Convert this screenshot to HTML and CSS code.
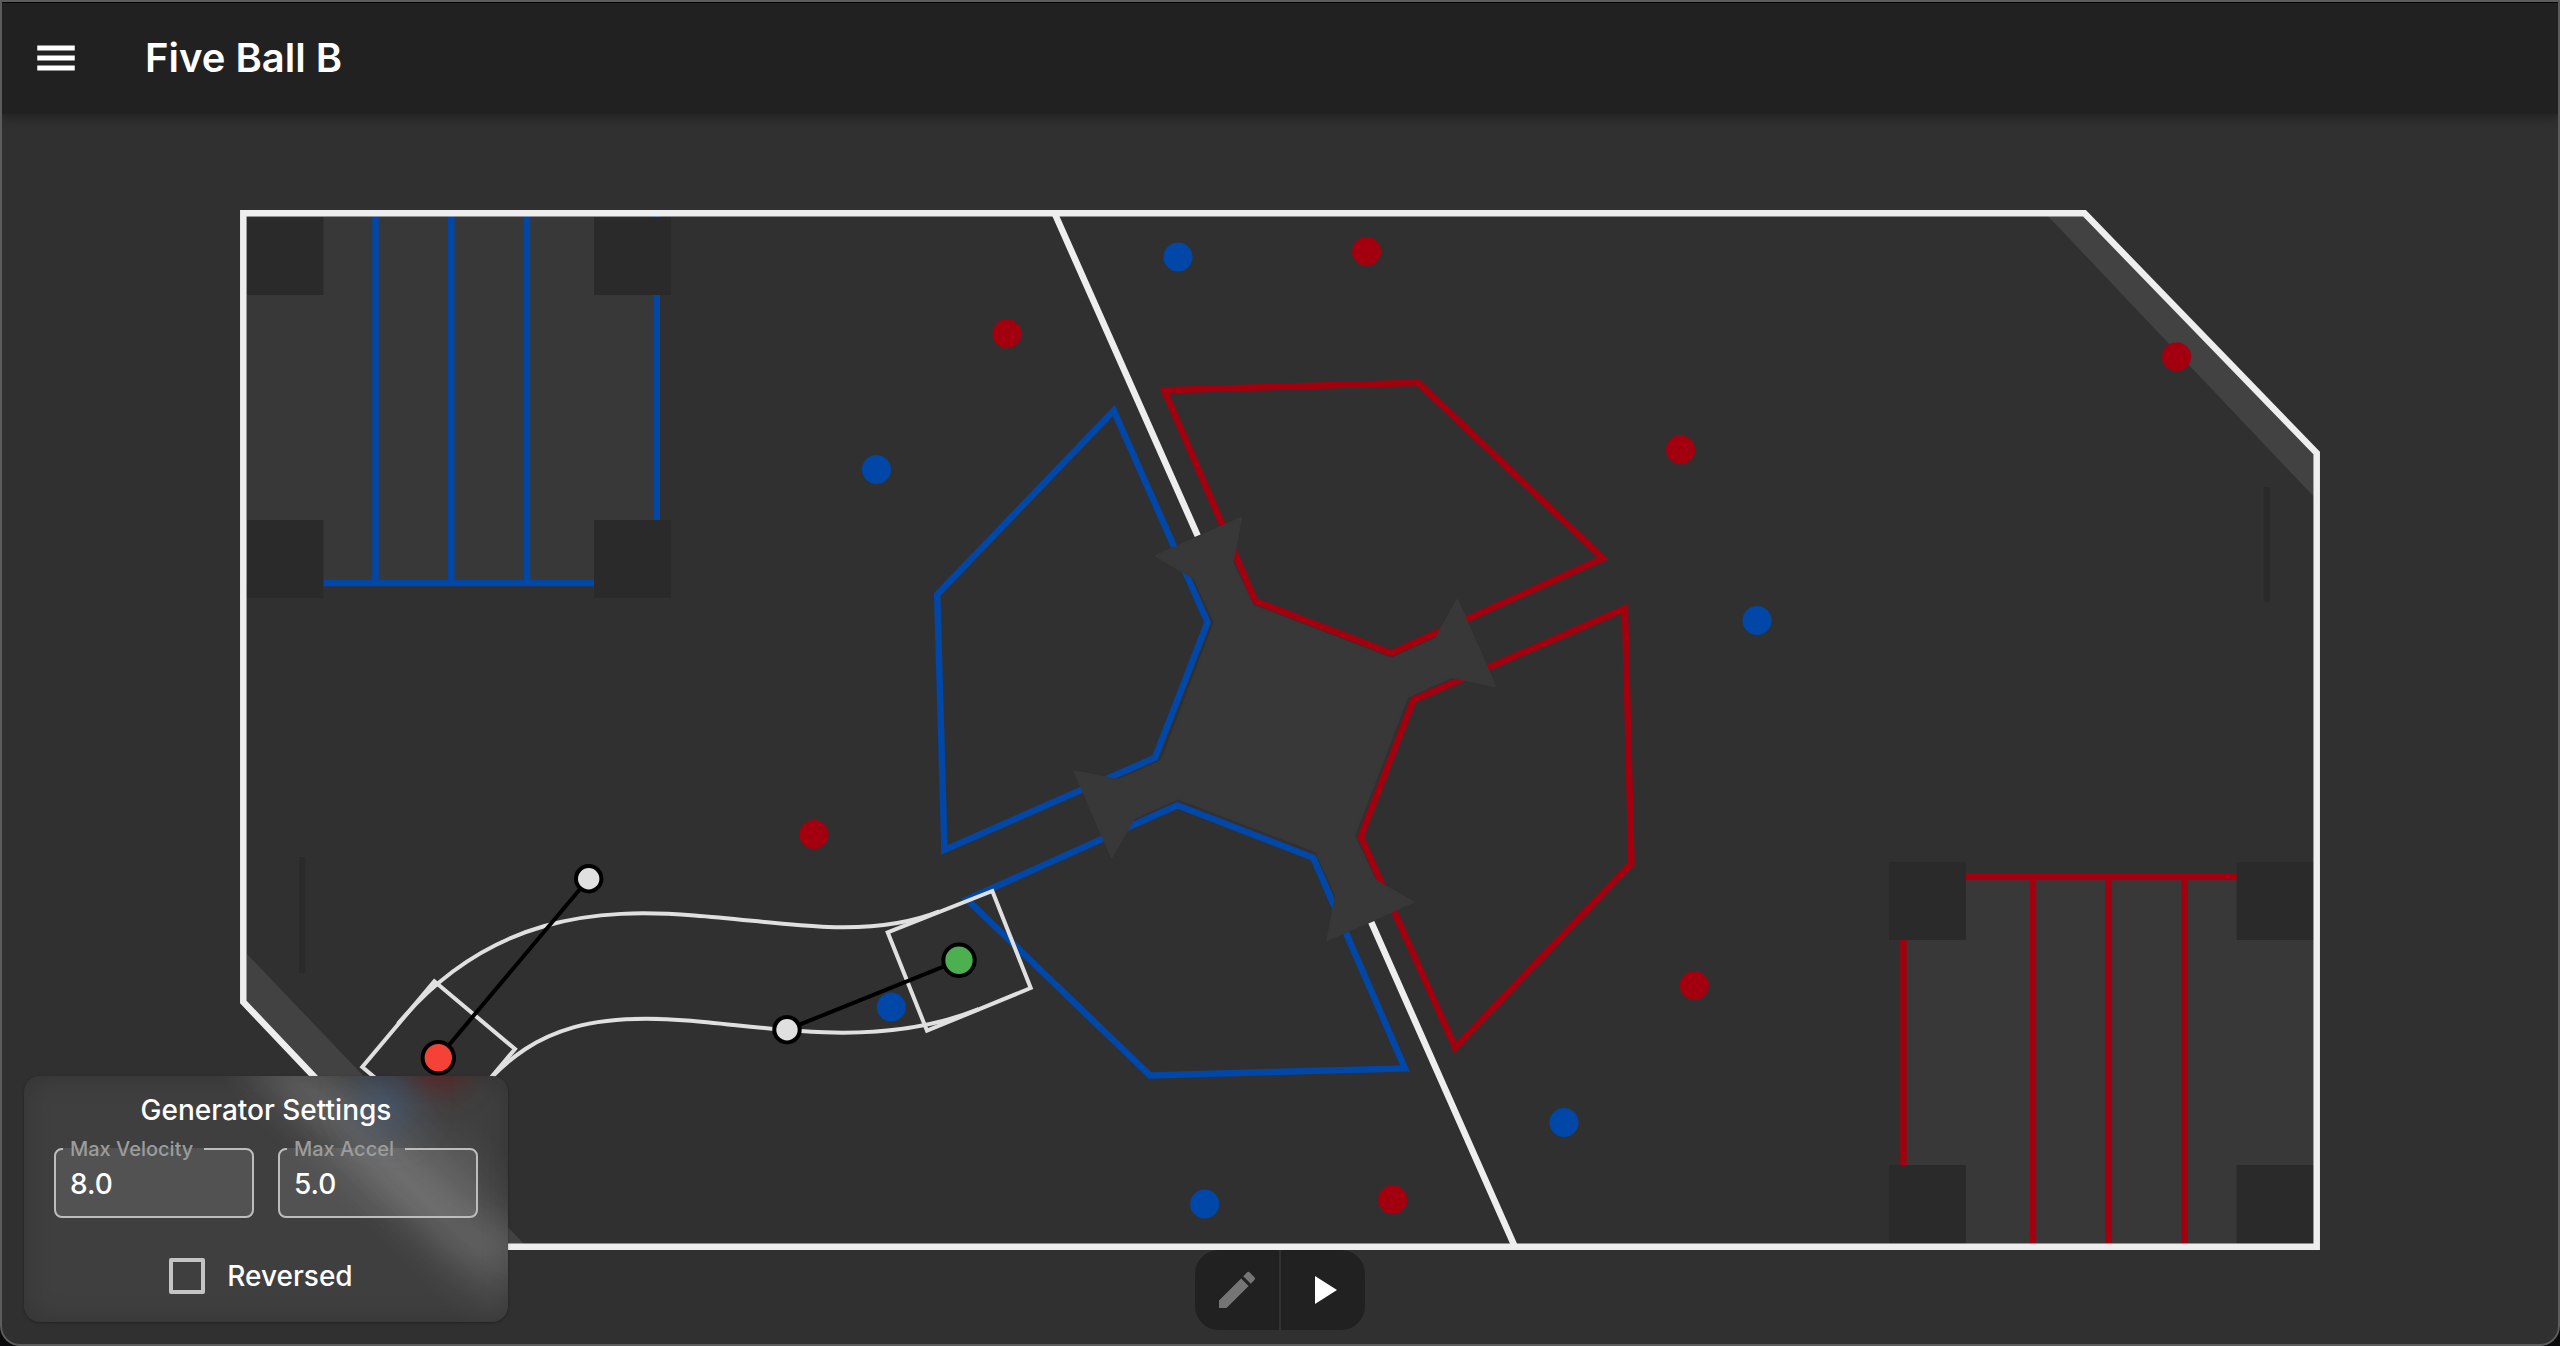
FILE: index.html
```html
<!DOCTYPE html>
<html lang="en">
<head>
<meta charset="utf-8">
<title>Five Ball B</title>
<meta name="viewport" content="width=device-width, initial-scale=1">
<link rel="stylesheet" href="styles.css">
</head>
<body>
<div class="window">
  <header class="app-bar">
    <button class="menu-button" type="button" aria-label="Open menu">
      <svg viewBox="0 0 24 24" aria-hidden="true"><path d="M3 18h18v-2.4H3zM3 13.2h18v-2.4H3zM3 6v2.4h18V6z"/></svg>
    </button>
    <h1 class="title">Five Ball B</h1>
  </header>

  <main class="stage">
    <svg class="field" viewBox="0 114 2560 1232" role="img" aria-label="Field with robot path">
      <!-- terminals -->
      <path class="terminal" d="M2046 214H2084L2316 453V499zM247 954V1008L476 1246H526z"/>
      <path class="block" d="M2263.5 487h6.5v115h-6.5zM299 857h6.5v116H299z"/>

      <!-- blue hangar -->
      <path class="floor" d="M246 216H657V583H246z"/>
      <path class="tape blue" d="M375.500 215V583M451.300 215V583M527 215V583M656.800 215V583M247 583H657"/>
      <path class="block" d="M247 217h76.500v78H247zM594 217h77v78h-77zM247 520h76.500v78H247zM594 520h77v78h-77z"/>

      <!-- red hangar -->
      <path class="floor" d="M1903 877H2314V1244H1903z"/>
      <path class="tape red" d="M2033 877V1245M2108.800 877V1245M2184.700 877V1245M1903.500 877V1245M1903 877H2313"/>
      <path class="block" d="M1889 862h77v78h-77zM2236.500 862H2314v78h-77.500zM1889 1165h77v79h-77zM2236.500 1165H2314v79h-77.500z"/>

      <!-- tarmacs -->
      <path class="tape blue" d="M1113.800 410.500L1207.600 622.300L1155 757.700L944.400 849.900L937.200 594.500z"/>
      <path class="tape blue" d="M1177.300 805.300L1313.300 857.700L1405 1068.400L1150 1075.400L967 899.400z"/>
      <path class="tape red" d="M1164.300 390.200L1418.400 382.800L1603 558.200L1391.300 653.300L1255.300 601z"/>
      <path class="tape red" d="M1455.300 1047.600L1360.800 836.700L1413.500 700L1625 608.500L1631.500 863.500z"/>
      <path class="tape white" d="M1054.500 213L1197.700 535.700M1371.300 922.300L1515 1247"/>

      <!-- hub -->
      <path class="hub" d="M1156 556L1241 518L1232.300 562.700L1252.700 605.700L1391.700 659L1435.700 638.700L1457.300 600L1495 686L1450.700 677L1407.300 697L1354 836L1375 880L1413 902L1327.500 940L1336 895L1316 851.300L1177.700 798.300L1134 818.300L1111.700 857L1074.500 771.500L1119.400 780L1161.700 761L1214.700 622L1194 578.300z"/>

      <!-- perimeter -->
      <path class="tape white" d="M243.300 213.300H2084.500L2316.700 453V1246.700H475.500L243.300 1002z"/>

      <!-- cargo -->
      <g class="cargo-blue">
        <circle cx="1178" cy="257" r="14.500"/><circle cx="876.500" cy="469.500" r="14.500"/>
        <circle cx="1757" cy="620.500" r="14.500"/><circle cx="1564" cy="1122.500" r="14.500"/>
        <circle cx="1204.700" cy="1204" r="14.500"/><circle cx="891.300" cy="1007" r="14.500"/>
        <circle cx="383.400" cy="1103" r="14.500"/>
      </g>
      <g class="cargo-red">
        <circle cx="1366.600" cy="251.600" r="14.500"/><circle cx="1007" cy="333.700" r="14.500"/>
        <circle cx="1680.600" cy="449.700" r="14.500"/><circle cx="814" cy="834.500" r="14.500"/>
        <circle cx="1694.400" cy="985.600" r="14.500"/><circle cx="1392.700" cy="1199.700" r="14.500"/>
        <circle cx="2176.600" cy="356.700" r="14.500"/>
      </g>

      <!-- robot path -->
      <g class="track">
        <path d="M397.900 1023.800C441.500 971.900 492.900 940.700 544.600 926C596.300 911.300 647 911.900 694.500 915.400C742 918.900 787 925.400 828.100 926.900C869.200 928.400 905.700 925 939.300 911.400"/>
        <path d="M478.700 1091.600C510.300 1054 540.200 1036.900 573.400 1027.400C606.600 1017.900 644.400 1017.200 686.700 1020.400C729 1023.600 775.200 1030.600 824.300 1032.300C873.400 1034 926.300 1030.300 978.700 1009.200"/>
        <path d="M434.300 981.300L515 1049L443 1134.700L362.300 1067z"/>
        <path d="M992.300 891L1030.700 988L927 1030.700L887.700 932.300z"/>
      </g>
      <path class="handle-line" d="M438.300 1057.700L588.700 878.700M787 1029.700L959 960.300"/>
      <g class="handles">
        <circle class="start" cx="438.300" cy="1057.700" r="15.700"/>
        <circle class="control" cx="588.700" cy="878.700" r="12.700"/>
        <circle class="control" cx="787" cy="1029.700" r="12.700"/>
        <circle class="end" cx="959" cy="960.300" r="15.700"/>
      </g>
    </svg>

    <form class="settings">
      <svg class="frost" viewBox="0 0 484 246" preserveAspectRatio="none" aria-hidden="true">
        <g class="frost-band">
          <path d="M245 -50L516 218"/>
        </g>
        <g class="frost-edge">
          <path d="M205 -60L451 171H600"/>
        </g>
        <circle class="frost-blue" cx="362" cy="26" r="26"/>
        <circle class="frost-red" cx="416" cy="-12" r="24"/>
      </svg>
      <h2 class="settings-title">Generator Settings</h2>
      <div class="fields">
        <fieldset class="field-box">
          <legend><label for="velocity">Max Velocity</label></legend>
          <input id="velocity" type="text" inputmode="decimal" value="8.0">
        </fieldset>
        <fieldset class="field-box">
          <legend><label for="accel">Max Accel</label></legend>
          <input id="accel" type="text" inputmode="decimal" value="5.0">
        </fieldset>
      </div>
      <label class="reversed"><input type="checkbox" name="reversed">Reversed</label>
    </form>

    <div class="mode-bar" role="toolbar" aria-label="Mode">
      <button type="button" aria-label="Edit path" disabled>
        <svg viewBox="0 0 24 24" aria-hidden="true"><path d="M3 17.250V21h3.750L17.810 9.940l-3.750-3.750L3 17.250zM20.710 7.040a.996.996 0 0 0 0-1.410l-2.340-2.340a.996.996 0 0 0-1.410 0l-1.830 1.830 3.750 3.750 1.830-1.830z"/></svg>
      </button>
      <button type="button" aria-label="Preview path">
        <svg viewBox="0 0 24 24" aria-hidden="true"><path d="M8 5v14l11-7z"/></svg>
      </button>
    </div>
  </main>
</div>
</body>
</html>
```
FILE: styles.css
```css
* { box-sizing: border-box; }

body {
  margin: 0;
  background: #0a0a0c;
  color: #fff;
  font-family: Inter, Roboto, "Liberation Sans", sans-serif;
}

button {
  border: 0;
  padding: 0;
  background: none;
  color: inherit;
}

.window {
  position: relative;
  display: flex;
  flex-direction: column;
  height: 100vh;
  overflow: hidden;
  border-radius: 0 0 20px 20px;
  background: #303030;
}

/* window edge, drawn over the content */
.window::after {
  content: "";
  position: absolute;
  inset: 0;
  z-index: 2;
  border: 2px solid #5c5c5c;
  border-radius: inherit;
  pointer-events: none;
}

.app-bar {
  position: relative;
  z-index: 1;
  display: flex;
  align-items: center;
  gap: 64px;
  height: 114px;
  padding: 0 32px 2px;
  border-top: 3px solid #000;
  background: #212121;
  box-shadow: 0 4px 10px rgba(0, 0, 0, 0.3);
}

.menu-button { display: flex; margin-left: -1px; }
.menu-button svg { width: 50px; height: 50px; fill: #fff; }

.title {
  margin: 0;
  font-size: 40px;
  font-weight: 600;
  line-height: 48px;
}

.stage {
  position: relative;
  flex: 1;
  min-height: 0;
}

.field { display: block; width: 100%; height: 100%; }

.terminal { fill: #424242; }
.floor { fill: #383838; }
.block { fill: #2a2a2a; }
.hub { fill: #383838; stroke: #383838; stroke-width: 2; stroke-linejoin: round; }
.tape { fill: none; stroke-width: 6.5; }
.tape.blue { stroke: #0047a8; }
.tape.red { stroke: #a2000f; }
.tape.white { stroke: #eee; }
.cargo-blue { fill: #0047a8; }
.cargo-red { fill: #a2000f; }
.track { fill: none; stroke: #e0e0e0; stroke-width: 4; }
.handle-line { stroke: #000; stroke-width: 4; }
.handles { stroke: #000; stroke-width: 4; }
.start { fill: #f44336; }
.control { fill: #e0e0e0; }
.end { fill: #4caf50; }

.settings {
  position: absolute;
  left: 24px;
  bottom: 24px;
  display: flex;
  flex-direction: column;
  width: 484px;
  padding: 16px 30px 28px;
  overflow: hidden;
  border-radius: 16px;
  background: #3f3f3f;
  box-shadow: 0 1px 3px rgba(0, 0, 0, 0.3);
}

/* frosted look of the field behind the panel */
.frost {
  position: absolute;
  inset: 0;
  width: 100%;
  height: 100%;
}

.frost-band { fill: none; stroke: rgba(255, 255, 255, 0.08); stroke-width: 90; filter: blur(22px); }
.frost-edge { fill: none; stroke: rgba(255, 255, 255, 0.16); stroke-width: 30; filter: blur(20px); }
.frost-blue { fill: rgba(64, 96, 144, 0.6); filter: blur(20px); }
.frost-red { fill: rgba(130, 24, 24, 0.7); filter: blur(16px); }

/* soft darkening toward the panel's edge */
.settings::after {
  content: "";
  position: absolute;
  inset: 0;
  border-radius: inherit;
  box-shadow: inset 0 0 28px rgba(0, 0, 0, 0.18);
  pointer-events: none;
}

.settings-title {
  position: relative;
  margin: 0;
  font-size: 28px;
  font-weight: 500;
  line-height: 36px;
  text-align: center;
}

.fields {
  position: relative;
  display: grid;
  grid-template-columns: 1fr 1fr;
  gap: 24px;
  margin-top: 8px;
}

.field-box {
  min-width: 0;
  height: 82px;
  margin: 0;
  padding: 0 7px;
  border: 2px solid #bdbdbd;
  border-radius: 8px;
  background: rgba(255, 255, 255, 0.1);
}

.field-box legend {
  padding: 0 11px 0 7px;
  color: #9c9c9c;
  font-size: 20px;
  font-weight: 500;
  line-height: 26px;
}

.field-box input {
  display: block;
  width: 100%;
  height: 44px;
  padding: 0 7px;
  border: 0;
  outline: 0;
  background: none;
  color: #fff;
  font: 500 28px/36px Inter, Roboto, "Liberation Sans", sans-serif;
}

.reversed {
  position: relative;
  display: flex;
  align-items: center;
  justify-content: center;
  gap: 22px;
  margin-top: 40px;
  padding-right: 10px;
  font-size: 28px;
  font-weight: 500;
  line-height: 36px;
}

.reversed input {
  appearance: none;
  width: 36px;
  height: 36px;
  margin: 0;
  border: 4px solid #c4c4c4;
  border-radius: 2px;
}

.mode-bar {
  position: absolute;
  bottom: 16px;
  left: 50%;
  display: flex;
  gap: 2px;
  width: 170px;
  height: 80px;
  overflow: hidden;
  border-radius: 24px;
  transform: translateX(-50%);
}

.mode-bar button {
  display: flex;
  flex: 1;
  align-items: center;
  justify-content: center;
  background: #212121;
}

.mode-bar svg { width: 48px; height: 48px; fill: #fff; }
.mode-bar button:disabled svg { fill: #757575; }
```
